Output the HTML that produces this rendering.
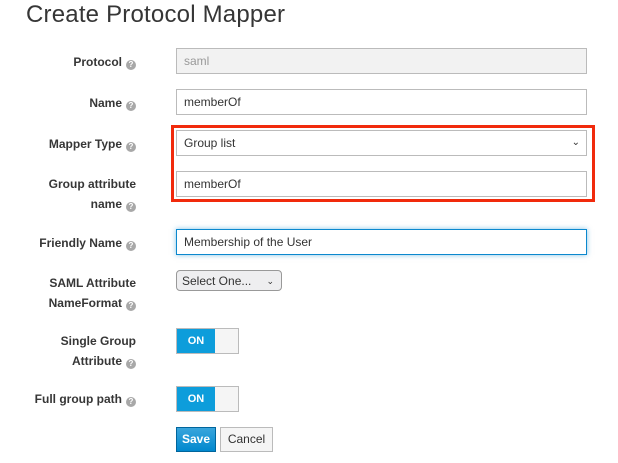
<!DOCTYPE html>
<html><head><style>
body{margin:0;width:618px;height:463px;background:#fff;font-family:"Liberation Sans",sans-serif;position:relative;overflow:hidden;color:#333}
.t{position:absolute;left:26px;top:1px;font-size:24px;font-weight:300;color:#363636;letter-spacing:.2px}
.l{position:absolute;right:482px;text-align:right;font-size:12px;font-weight:bold;line-height:20px;color:#363636}
.q{display:inline-block;width:10px;height:10px;border-radius:50%;background:#a8a8a8;color:#fff;font-size:8px;line-height:10px;text-align:center;vertical-align:-1px;margin-left:4px}
.i{position:absolute;left:176px;height:24px;border:1px solid #bbb;font-size:12px;line-height:24px;padding-left:7px;box-sizing:content-box;width:402px}
.tg{position:absolute;left:176px;width:61px;height:24px;border:1px solid #bbb;background:#f5f5f5}
.tg b{position:absolute;left:0;top:0;width:38px;height:24px;background:#0d9ddb;color:#fff;font-size:11px;line-height:24px;text-align:center}
</style></head><body>
<div class="t">Create Protocol Mapper</div>
<div class="l" style="top:52px">Protocol<span class="q">?</span></div>
<div class="i" style="top:48px;background:#f2f2f2;color:#999">saml</div>
<div class="l" style="top:93px">Name<span class="q">?</span></div>
<div class="i" style="top:89px">memberOf</div>
<div style="position:absolute;left:171px;top:125px;width:418px;height:71px;border:3px solid #f12a0c"></div>
<div class="l" style="top:134px">Mapper Type<span class="q">?</span></div>
<div class="i" style="top:130px">Group list<span style="position:absolute;right:6px;top:0;font-size:10px">&#8964;</span></div>
<div class="l" style="top:174px">Group attribute<br>name<span class="q">?</span></div>
<div class="i" style="top:171px">memberOf</div>
<div class="l" style="top:233px">Friendly Name<span class="q">?</span></div>
<div class="i" style="top:229px;border-color:#0b88ce;box-shadow:0 0 5px rgba(11,136,206,.5)">Membership of the User</div>
<div class="l" style="top:273px">SAML Attribute<br>NameFormat<span class="q">?</span></div>
<div style="position:absolute;left:176px;top:270px;height:21px;border:1px solid #999;border-radius:4px;background:#eeeef0;font-size:12px;line-height:21px;padding-left:5px;box-sizing:border-box;width:106px">Select One...<span style="position:absolute;right:7px;top:0;font-size:9px">&#8964;</span></div>
<div class="l" style="top:331px">Single Group<br>Attribute<span class="q">?</span></div>
<div class="tg" style="top:328px"><b>ON</b></div>
<div class="l" style="top:389px">Full group path<span class="q">?</span></div>
<div class="tg" style="top:386px"><b>ON</b></div>
<div style="position:absolute;left:176px;top:427px;width:38px;height:23px;border:1px solid #00659c;background:linear-gradient(#39a5dc,#0088ce);color:#fff;font-size:12px;font-weight:bold;line-height:23px;text-align:center">Save</div>
<div style="position:absolute;left:220px;top:427px;width:51px;height:23px;border:1px solid #bbb;background:#f5f5f5;color:#333;font-size:12px;line-height:23px;text-align:center">Cancel</div>
</body></html>
